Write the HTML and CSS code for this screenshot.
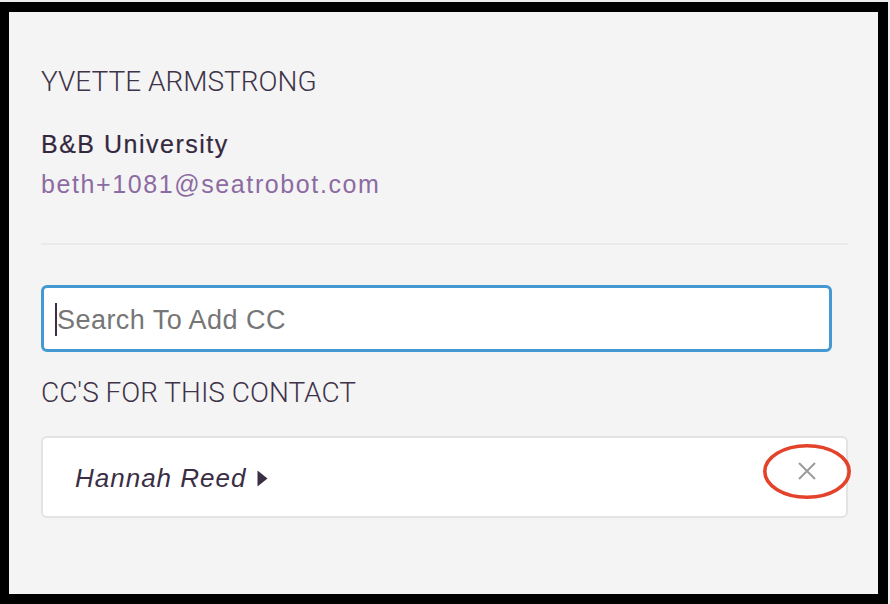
FILE: index.html
```html
<!DOCTYPE html>
<html lang="en">
<head>
<meta charset="utf-8">
<title>Contact CCs</title>
<link rel="stylesheet" href="styles.css">
</head>
<body>
<div class="frame">
  <div class="panel">
    <h2 class="section-title">YVETTE ARMSTRONG</h2>
    <div class="org">B&amp;B University</div>
    <div class="email">beth+1081@seatrobot.com</div>
    <hr class="divider">
    <div class="search"><span class="caret"></span><span class="placeholder">Search To Add CC</span></div>
    <h2 class="section-title cc-title">CC'S FOR THIS CONTACT</h2>
    <div class="cc-card">
      <span class="cc-name">Hannah Reed</span>
      <svg class="cc-arrow" width="11" height="17" viewBox="0 0 11 17"><polygon points="0.5,0.5 10.5,8.5 0.5,16.5" fill="#3a2e45"/></svg>
      <span class="spacer"></span>
      <svg class="cc-remove" width="18" height="18" viewBox="0 0 18 18"><path d="M1 1 L17 17 M17 1 L1 17" stroke="#9b9b9e" stroke-width="2" fill="none"/></svg>
      <svg class="annotation" width="88" height="55" viewBox="0 0 88 55"><ellipse cx="44" cy="27.5" rx="42.2" ry="25.7" fill="none" stroke="#e4432b" stroke-width="3.6"/></svg>
    </div>
  </div>
</div>
</body>
</html>
```
FILE: styles.css
```css
html, body {
  margin: 0;
  padding: 0;
  background: #ededed;
}
body {
  width: 890px;
  height: 604px;
  padding-top: 2px;
  box-sizing: border-box;
}
.frame {
  width: 888px;
  height: 602px;
  box-sizing: border-box;
  border-style: solid;
  border-color: #000;
  border-width: 10px 10px 10px 9px;
  background: #000;
}
.panel {
  height: 582px;
  background: #f4f4f4;
  box-sizing: border-box;
  padding: 50px 30px 0 32px;
}
.section-title {
  margin: 0;
  font-family: Roboto, "Liberation Sans", sans-serif;
  font-weight: 300;
  font-size: 28px;
  line-height: 40px;
  color: #3e3349;
  letter-spacing: 0;
}
.org {
  margin-top: 22px;
  font-family: "Liberation Sans", Arial, sans-serif;
  font-size: 25px;
  line-height: 40px;
  letter-spacing: 1.5px;
  color: #34283f;
  -webkit-text-stroke: 0.2px #34283f;
}
.email {
  font-family: "Liberation Sans", Arial, sans-serif;
  font-size: 25px;
  line-height: 40px;
  letter-spacing: 1.6px;
  color: #8c6ba3;
}
.divider {
  margin: 39px 0 0 0;
  border: 0;
  border-top: 2px solid #eaeaea;
  height: 0;
}
.search {
  margin-top: 40px;
  margin-right: 16px;
  height: 67px;
  box-sizing: border-box;
  border: 3px solid #4599d3;
  border-radius: 6px;
  background: #fff;
  padding-left: 11px;
  display: flex;
  align-items: center;
}
.caret {
  width: 2px;
  height: 33px;
  background: #3d2e4a;
  margin-top: 2px;
}
.placeholder {
  font-family: "Liberation Sans", Arial, sans-serif;
  font-size: 27px;
  letter-spacing: 0.45px;
  line-height: 61px;
  margin-top: 4px;
  color: #767676;
}
.cc-title {
  margin-top: 21px;
}
.cc-card {
  position: relative;
  margin-top: 23px;
  height: 82px;
  box-sizing: border-box;
  border: 2px solid #e3e3e3;
  border-radius: 6px;
  background: #fff;
  display: flex;
  align-items: center;
  padding: 0 30px 0 32px;
}
.cc-name {
  font-family: "Liberation Sans", Arial, sans-serif;
  font-style: italic;
  font-size: 26px;
  letter-spacing: 1px;
  color: #3a2e45;
  line-height: 30px;
  margin-top: 2px;
}
.cc-arrow {
  margin-left: 11px;
  margin-top: 2px;
}
.spacer {
  flex: 1;
}
.cc-remove {
  margin-bottom: 12px;
}
.annotation {
  position: absolute;
  left: 720px;
  top: 6px;
}
```
